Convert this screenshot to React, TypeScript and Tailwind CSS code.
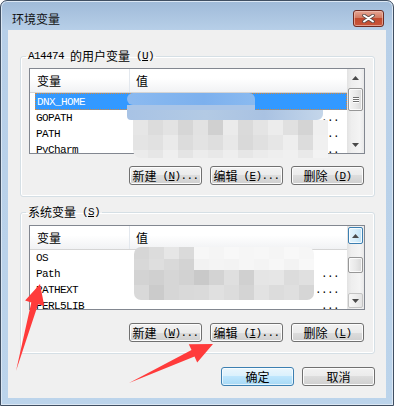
import React from "react";

const CJK = "font-['Noto_Sans_CJK_SC',sans-serif] text-[12px] leading-[16px]";
const MONO = "font-['Liberation_Mono',monospace] text-[11px] leading-[16px] tracking-[-0.6px]";

function Z({ children }: { children: React.ReactNode }) {
  return <span className={CJK}>{children}</span>;
}
function M({ children }: { children: React.ReactNode }) {
  return <span className={MONO}>{children}</span>;
}

function Btn({ zh, k, dots = "", def = false }: { zh: string; k?: string; dots?: string; def?: boolean }) {
  return (
    <div
      className={`flex h-[19px] w-[73px] items-center justify-center overflow-hidden rounded-[3px] border text-black ${
        def
          ? "border-[#3c7fb1] bg-[linear-gradient(#eaf6fd,#d9f0fc_50%,#bee6fd_50%,#a7d9f5)] shadow-[inset_0_0_0_1px_#ffffffaa]"
          : "border-[#707070] bg-[linear-gradient(#f2f2f2,#ebebeb_50%,#dddddd_50%,#cfcfcf)] shadow-[inset_0_0_0_1px_#fcfcfc]"
      }`}
    >
      <div className="flex h-[16px] items-center">
        <Z>{zh}</Z>
        {k && (
          <M>
            &nbsp;(<u>{k}</u>){dots}
          </M>
        )}
      </div>
    </div>
  );
}

function Tri({ up }: { up: boolean }) {
  return (
    <svg width="7" height="4" viewBox="0 0 7 4">
      <path d={up ? "M0 4L3.5 0L7 4Z" : "M0 0L3.5 4L7 0Z"} fill="#4a4a4a" />
    </svg>
  );
}

function Grip() {
  return (
    <div className="flex flex-col gap-[1px]">
      <div className="h-[1px] w-[6px] bg-[#6f6f6f] shadow-[0_1px_0_#fff]" />
      <div className="h-[1px] w-[6px] bg-[#6f6f6f] shadow-[0_1px_0_#fff]" />
      <div className="h-[1px] w-[6px] bg-[#6f6f6f] shadow-[0_1px_0_#fff]" />
    </div>
  );
}

type Row = { name: string; dots?: string; sel?: boolean };

function ListBox({ rows, variant }: { rows: Row[]; variant: 1 | 2 }) {
  return (
    <div className={`flex ${variant === 1 ? "h-[86px]" : "h-[85px]"} border border-[#828790] bg-white`}>
      <div className="flex min-w-0 flex-1 flex-col overflow-hidden">
        <div className="flex h-[24px] shrink-0 border-b border-[#d5d5d5] bg-[linear-gradient(#ffffff,#ffffff_40%,#f1f2f4)]">
          <div className="flex w-[100px] items-center border-r border-[#e3e8ee] pl-[7px]">
            <Z>变量</Z>
          </div>
          <div className="flex items-center pl-[6px]">
            <Z>值</Z>
          </div>
        </div>
        {rows.map((r) => (
          <div key={r.name} className={`flex shrink-0 pl-[5px] ${r.sel ? "h-[17px]" : "h-[16px]"}`}>
            <div
              className={`flex h-full flex-1 items-center ${
                r.sel ? "border border-dotted border-[#d9893a] bg-[#3399ff] text-white" : "text-black"
              }`}
            >
              <div className="flex h-[16px] w-[95px] items-center pl-[1px]">
                <M>{r.name}</M>
              </div>
              <div className="flex h-[16px] flex-1 items-center justify-end pr-[8px]">
                <M>{r.dots ?? ""}</M>
              </div>
            </div>
          </div>
        ))}
      </div>
      <div className="flex w-[17px] shrink-0 flex-col items-stretch bg-[linear-gradient(90deg,#e2e2e2,#eeeeee_25%,#f4f4f4_75%,#e9e9e9)]">
        {variant === 1 ? (
          <>
            <div className="flex h-[17px] items-center justify-center">
              <Tri up />
            </div>
            <div className="mx-[1px] mt-[2px] flex h-[23px] items-center justify-center rounded-[2px] border border-[#979797] bg-[linear-gradient(90deg,#f4f4f4,#e9e9e9_50%,#d8d8d8)] shadow-[inset_0_0_0_1px_#ffffffcc]">
              <Grip />
            </div>
            <div className="flex-1" />
            <div className="flex h-[17px] items-center justify-center">
              <Tri up={false} />
            </div>
          </>
        ) : (
          <>
            <div className="mx-[1px] mt-[1px] flex h-[17px] items-center justify-center rounded-[2px] border border-[#3c7fb1] bg-[linear-gradient(90deg,#e5f4fc,#d6eefb_50%,#bfe2f6)] shadow-[inset_0_0_0_1px_#ffffffcc]">
              <Tri up />
            </div>
            <div className="mx-[1px] mt-[13px] h-[16px] rounded-[2px] border border-[#979797] bg-[linear-gradient(90deg,#f4f4f4,#e9e9e9_50%,#d8d8d8)] shadow-[inset_0_0_0_1px_#ffffffcc]" />
            <div className="flex-1" />
            <div className="mx-[1px] mb-[1px] flex h-[15px] items-center justify-center rounded-[2px] border border-[#c4c4c4] bg-[linear-gradient(90deg,#f7f7f7,#efefef_50%,#e3e3e3)]">
              <Tri up={false} />
            </div>
          </>
        )}
      </div>
    </div>
  );
}

const g1r1 = ["bg-[#e6e6e6]", "bg-[#dcdcdc]", "bg-[#e3e3e3]", "bg-[#d6d6d6]", "bg-[#e2e2e2]", "bg-[#d0d0d0]", "bg-[#ebebeb]", "bg-[#dadada]", "bg-[#e4e4e4]", "bg-[#ececec]", "bg-[#e0e0e0]", "bg-[#d4d4d4]", "bg-[#efefef]"];
const g1r2 = ["bg-[#e4e4e4]", "bg-[#e1e1e1]", "bg-[#eaeaea]", "bg-[#dcdcdc]", "bg-[#e3e3e3]", "bg-[#dedede]", "bg-[#e8e8e8]", "bg-[#d9d9d9]", "bg-[#e0e0e0]", "bg-[#e6e6e6]", "bg-[#eeeeee]", "bg-[#dcdcdc]", "bg-[#f0f0f0]"];
const g1r3 = ["bg-[#ebebeb]", "bg-[#e6e6e6]", "bg-[#efefef]", "bg-[#e4e4e4]", "bg-[#ececec]", "bg-[#e8e8e8]", "bg-[#eeeeee]", "bg-[#e6e6e6]", "bg-[#ebebeb]", "bg-[#eeeeee]", "bg-[#f0f0f0]", "bg-[#e9e9e9]", "bg-[#f3f3f3]"];

const g2r1 = ["bg-[#d6d6d6]", "bg-[#dcdcdc]", "bg-[#e6e6e6]", "bg-[#dadada]", "bg-[#f7f7f7]", "bg-[#f5f5f5]", "bg-[#f8f8f8]", "bg-[#f6f6f6]", "bg-[#f7f7f7]", "bg-[#f5f5f5]", "bg-[#f8f8f8]", "bg-[#f6f6f6]"];
const g2r2 = ["bg-[#d8d8d8]", "bg-[#dedede]", "bg-[#d9d9d9]", "bg-[#d3d3d3]", "bg-[#f2f2f2]", "bg-[#f4f4f4]", "bg-[#f3f3f3]", "bg-[#f6f6f6]", "bg-[#f4f4f4]", "bg-[#f7f7f7]", "bg-[#f3f3f3]", "bg-[#f8f8f8]"];
const g2r3 = ["bg-[#d3d3d3]", "bg-[#d0d0d0]", "bg-[#d6d6d6]", "bg-[#d2d2d2]", "bg-[#c9c9c9]", "bg-[#d3d3d3]", "bg-[#dfdfdf]", "bg-[#d0d0d0]", "bg-[#e5e5e5]", "bg-[#e6e6e6]", "bg-[#dcdcdc]", "bg-[#e0e0e0]"];
const g2r4 = ["bg-[#d9d9d9]", "bg-[#cbcbcb]", "bg-[#d6d6d6]", "bg-[#d9d9d9]", "bg-[#dadada]", "bg-[#e0e0e0]", "bg-[#dcdcdc]", "bg-[#d4d4d4]", "bg-[#e2e2e2]", "bg-[#dcdcdc]", "bg-[#dfdfdf]", "bg-[#d6d6d6]"];

function Blocks({ cls, h }: { cls: string[]; h: string }) {
  return (
    <div className={`flex ${h}`}>
      {cls.map((c, i) => (
        <div key={i} className={`w-[15px] shrink-0 ${c}`} />
      ))}
    </div>
  );
}

export default function App() {
  return (
    <div className="relative h-[406px] w-[394px] overflow-hidden">
      <div className="flex h-[406px] w-[394px] flex-col rounded-t-[7px] border border-[#404f62] bg-[linear-gradient(#9fbad8,#b7cfe8_29px,#bcd4eb)] shadow-[inset_0_0_0_1px_#dbe7f4]">
        {/* title bar */}
        <div className="flex h-[29px] shrink-0 items-start justify-between pl-[11px] pr-[9px] pt-[9px]">
          <div className="mt-[1px] font-['Noto_Sans_CJK_SC',sans-serif] text-[12px] leading-[16px] text-[#111]">环境变量</div>
          <div className="flex h-[17px] w-[31px] items-center justify-center rounded-[3px] border border-[#6e2b22] bg-[linear-gradient(#e6a695,#d27a62_45%,#c24a2e_50%,#c9553a)] shadow-[inset_0_0_0_1px_#eec2b5aa]">
            <svg width="13" height="9" viewBox="0 0 13 9">
              <path d="M2 1.5L11 7.5M11 1.5L2 7.5" stroke="#5a4a48" strokeWidth="3.6" strokeLinecap="round" />
              <path d="M2 1.5L11 7.5M11 1.5L2 7.5" stroke="#ffffff" strokeWidth="2" strokeLinecap="round" />
            </svg>
          </div>
        </div>

        {/* client area */}
        <div className="mx-[7px] mb-[7px] flex flex-1 flex-col bg-[#f0f0f0] pl-[12px] pr-[11px] pt-[18px] text-black">
          <fieldset className="rounded-[3px] border border-[#d5dfe5] pb-[11px] pl-[8px] pr-[9px] pt-[4px] shadow-[inset_0_0_0_1px_#ffffff]">
            <legend className="ml-[-3px] flex h-[16px] items-center px-[2px]">
              <M>A14474&nbsp;</M>
              <Z>的用户变量</Z>
              <M>
                &nbsp;(<u>U</u>)
              </M>
            </legend>
            <ListBox
              variant={1}
              rows={[
                { name: "DNX_HOME", sel: true },
                { name: "GOPATH", dots: "..." },
                { name: "PATH", dots: "..." },
                { name: "PyCharm", dots: "..." },
              ]}
            />
            <div className="mt-[12px] flex justify-end gap-[8px] pr-[1px]">
              <Btn zh="新建" k="N" dots="..." />
              <Btn zh="编辑" k="E" dots="..." />
              <Btn zh="删除" k="D" />
            </div>
          </fieldset>

          <fieldset className="mt-[7px] rounded-[3px] border border-[#d5dfe5] pb-[11px] pl-[8px] pr-[9px] pt-[5px] shadow-[inset_0_0_0_1px_#ffffff]">
            <legend className="ml-[-3px] flex h-[16px] items-center px-[2px]">
              <Z>系统变量</Z>
              <M>
                &nbsp;(<u>S</u>)
              </M>
            </legend>
            <ListBox
              variant={2}
              rows={[
                { name: "OS" },
                { name: "Path", dots: "..." },
                { name: "PATHEXT", dots: "...." },
                { name: "PERL5LIB", dots: "..." },
              ]}
            />
            <div className="mt-[13px] flex justify-end gap-[8px] pr-[1px]">
              <Btn zh="新建" k="W" dots="..." />
              <Btn zh="编辑" k="I" dots="..." />
              <Btn zh="删除" k="L" />
            </div>
          </fieldset>

          <div className="mt-[13px] flex justify-end gap-[8px]">
            <Btn zh="确定" def />
            <Btn zh="取消" />
          </div>
        </div>
      </div>

      {/* blurred value overlay 1 */}
      <div className="absolute left-[127px] top-[93px] flex w-[206px] flex-col">
        <div className="h-[12px] w-[128px] rounded-l-[6px] rounded-tr-[6px] bg-[linear-gradient(90deg,#8cbaf0,#83b5ef_30%,#7cb0ee_60%,#8abaf0)]" />
        <div className="h-[5px] w-[128px] bg-[#aac5e7]" />
        <div className="h-[10px] w-[196px] rounded-bl-[4px] rounded-br-[6px] bg-[linear-gradient(90deg,#a8c3e5,#b3cae4_40%,#a9c2e2_70%,#c4d6ea)]" />
        <div className="ml-[6px] overflow-hidden rounded-b-[8px] rounded-tr-[4px]">
          <Blocks cls={g1r1} h="h-[15px]" />
          <Blocks cls={g1r2} h="h-[15px]" />
          <Blocks cls={g1r3} h="h-[8px]" />
        </div>
      </div>

      {/* blurred value overlay 2 */}
      <div className="absolute left-[134px] top-[247px] overflow-hidden rounded-[7px]">
        <Blocks cls={g2r1} h="h-[12px]" />
        <Blocks cls={g2r2} h="h-[11px]" />
        <Blocks cls={g2r3} h="h-[15px]" />
        <Blocks cls={g2r4} h="h-[15px]" />
      </div>

      {/* red arrows */}
      <svg className="pointer-events-none absolute left-0 top-0" width="394" height="406" viewBox="0 0 394 406">
        <polygon points="16,371 31.3,302.4 25.1,300.6 40,284 44.3,305.9 38.1,304.2" fill="#ff3b3b" />
        <polygon points="129,383 191.5,350.1 188.8,344.2 213,344 197.2,362.4 194.5,356.5" fill="#ff3b3b" />
      </svg>
    </div>
  );
}
